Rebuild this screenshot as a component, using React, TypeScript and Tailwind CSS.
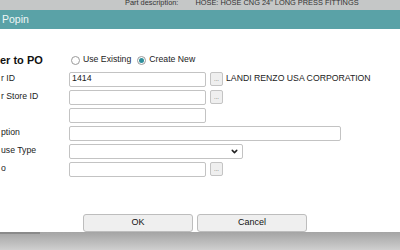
import { ChevronDown } from 'lucide-react';

const Dots = () => (
  <button className="ml-[4px] flex h-[14px] w-[13px] items-end justify-center rounded-[2px] border border-[#c4c4c4] bg-[#efefef] pb-[3px] text-[6px] leading-none text-[#555]">
    ...
  </button>
);

const Field = ({ value = '', w = 'w-[137px]' }: { value?: string; w?: string }) => (
  <div className={`${w} flex h-[15px] items-center rounded-[2px] border border-[#c3c3c3] bg-white px-[2px] text-[8.8px] text-[#222]`}>
    {value}
  </div>
);

const Radio = ({ checked }: { checked?: boolean }) => (
  <span className="flex h-[9px] w-[9px] items-center justify-center rounded-full border border-[#9a9a9a] bg-white">
    {checked && <span className="h-[5px] w-[5px] rounded-full bg-[#2f8f9c]" />}
  </span>
);

const Row = ({ label, children }: { label: string; children?: React.ReactNode }) => (
  <div className="flex h-[18px] items-center">
    <div className="w-[69px] whitespace-nowrap pl-[1px] text-[8.7px] text-[#222]">{label}</div>
    {children}
  </div>
);

export default function App() {
  return (
    <div className="flex h-[250px] w-[400px] flex-col overflow-hidden bg-white font-['Liberation_Sans',Arial,sans-serif]">
      <div className="h-[10px] overflow-hidden bg-[#c5c7c7]">
        <div className="-mt-[1px] flex whitespace-nowrap text-[7.4px] leading-none text-[#333]">
          <span className="ml-[125px]">Part description:</span>
          <span className="ml-[17px]">HOSE: HOSE CNG 24" LONG PRESS FITTINGS</span>
        </div>
      </div>
      <div className="flex h-[19px] items-center bg-[#5aa2a7] pl-[2px] text-[10.5px] text-[#eef6f6]">Popin</div>

      <div className="flex flex-1 flex-col">
        <div className="mt-[22px] flex h-[18px] items-center whitespace-nowrap">
          <div className="w-[71px] text-[11px] font-bold text-[#111]">er to PO</div>
          <Radio />
          <span className="ml-[3px] text-[8.7px] text-[#222]">Use Existing</span>
          <span className="ml-[6px]">
            <Radio checked />
          </span>
          <span className="ml-[3px] text-[8.7px] text-[#222]">Create New</span>
        </div>

        <div className="mt-[1px] flex flex-col">
          <Row label="r ID">
            <Field value="1414" />
            <Dots />
            <span className="ml-[3px] whitespace-nowrap text-[8.7px] text-[#222]">LANDI RENZO USA CORPORATION</span>
          </Row>
          <Row label="r Store ID">
            <Field />
            <Dots />
          </Row>
          <Row label="">
            <Field />
          </Row>
          <Row label="ption">
            <Field w="w-[272px]" />
          </Row>
          <Row label="use Type">
            <div className="flex h-[15px] w-[174px] items-center justify-end rounded-[2px] border border-[#c3c3c3] bg-white pr-[3px]">
              <ChevronDown size={9} strokeWidth={4} className="text-[#222]" />
            </div>
          </Row>
          <Row label="o">
            <Field />
            <Dots />
          </Row>
        </div>

        <div className="mt-[36px] flex gap-[4px] pl-[83px]">
          <button className="h-[18px] w-[110px] rounded-[3px] border border-[#bdbdbd] bg-[#efefef] text-[9px] text-[#111]">OK</button>
          <button className="h-[18px] w-[110px] rounded-[3px] border border-[#bdbdbd] bg-[#efefef] text-[9px] text-[#111]">Cancel</button>
        </div>
      </div>

      <div className="relative h-[18px] bg-gradient-to-b from-[#a4a4a4] to-[#cfcfcf]">
        <div className="absolute left-0 top-0 h-[2px] w-[40px] bg-[#8a8a8a]" />
      </div>
    </div>
  );
}
